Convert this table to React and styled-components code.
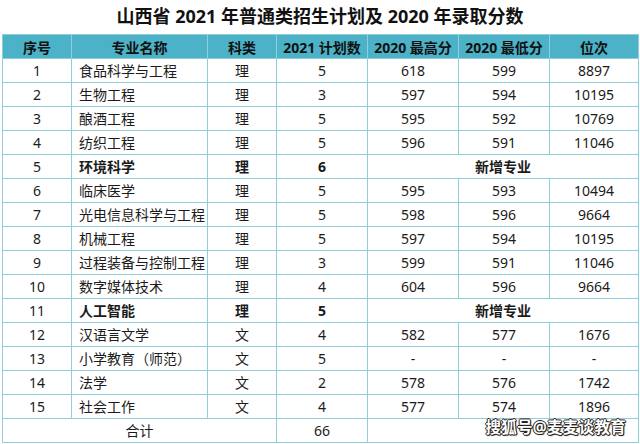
import styled, { createGlobalStyle } from "styled-components";

const GlobalStyle = createGlobalStyle`
  body {
    margin: 0;
    background: #fff;
    font-family: "Noto Sans", "Noto Sans CJK SC", sans-serif;
    color: #1b1b1b;
  }
`;

const Page = styled.div`
  width: 640px;
  height: 444px;
  padding: 0 2px;
  box-sizing: border-box;
  position: relative;
  overflow: hidden;
`;

const Title = styled.h1`
  margin: 0;
  height: 34px;
  line-height: 32px;
  text-align: center;
  font-size: 18px;
  font-weight: 700;
  color: #111;
`;

const Table = styled.table`
  width: 636px;
  border-collapse: collapse;
  table-layout: fixed;
  font-size: 14px;
`;

const HeadCell = styled.th`
  height: 23px;
  padding: 0;
  background: #4bb2c7;
  border: 1px solid #8fcfdc;
  font-weight: 700;
  font-size: 14px;
  color: #111;
  text-align: center;
`;

const Cell = styled.td`
  height: 23px;
  padding: ${(p) => (p.$left ? "0 0 0 7px" : "0")};
  border: 1px solid #8fcfdc;
  text-align: ${(p) => (p.$left ? "left" : "center")};
  font-weight: ${(p) => (p.$bold ? 700 : 400)};
  white-space: nowrap;
  line-height: 22px;
`;

const Watermark = styled.span`
  position: absolute;
  right: 14px;
  bottom: 6px;
  font-size: 15.5px;
  font-weight: 700;
  color: #fff;
  letter-spacing: 0.3px;
  text-shadow: 1px 0 0 #222, -1px 0 0 #222, 0 1px 0 #222, 0 -1px 0 #222,
    1px 1px 1px #222;
`;

const widths = [69, 136, 69, 91, 91, 91, 89];
const heads = ["序号", "专业名称", "科类", "2021 计划数", "2020 最高分", "2020 最低分", "位次"];

const rows = [
  ["1", "食品科学与工程", "理", "5", "618", "599", "8897"],
  ["2", "生物工程", "理", "3", "597", "594", "10195"],
  ["3", "酿酒工程", "理", "5", "595", "592", "10769"],
  ["4", "纺织工程", "理", "5", "596", "591", "11046"],
  ["5", "环境科学", "理", "6", null],
  ["6", "临床医学", "理", "5", "595", "593", "10494"],
  ["7", "光电信息科学与工程", "理", "5", "598", "596", "9664"],
  ["8", "机械工程", "理", "5", "597", "594", "10195"],
  ["9", "过程装备与控制工程", "理", "3", "599", "591", "11046"],
  ["10", "数字媒体技术", "理", "4", "604", "596", "9664"],
  ["11", "人工智能", "理", "5", null],
  ["12", "汉语言文学", "文", "4", "582", "577", "1676"],
  ["13", "小学教育（师范）", "文", "5", "-", "-", "-"],
  ["14", "法学", "文", "2", "578", "576", "1742"],
  ["15", "社会工作", "文", "4", "577", "574", "1896"],
];

export default function App() {
  return (
    <Page>
      <GlobalStyle />
      <Title>山西省 2021 年普通类招生计划及 2020 年录取分数</Title>
      <Table>
        <colgroup>
          {widths.map((w, i) => (
            <col key={i} style={{ width: w }} />
          ))}
        </colgroup>
        <thead>
          <tr>
            {heads.map((h) => (
              <HeadCell key={h}>{h}</HeadCell>
            ))}
          </tr>
        </thead>
        <tbody>
          {rows.map((r) => {
            const isNew = r[4] === null;
            return (
              <tr key={r[0]}>
                <Cell>{r[0]}</Cell>
                <Cell $left $bold={isNew}>{r[1]}</Cell>
                <Cell $bold={isNew}>{r[2]}</Cell>
                <Cell $bold={isNew}>{r[3]}</Cell>
                {isNew ? (
                  <Cell colSpan={3} $bold>新增专业</Cell>
                ) : (
                  <>
                    <Cell>{r[4]}</Cell>
                    <Cell>{r[5]}</Cell>
                    <Cell>{r[6]}</Cell>
                  </>
                )}
              </tr>
            );
          })}
          <tr>
            <Cell colSpan={3}>合计</Cell>
            <Cell>66</Cell>
            <Cell colSpan={3}></Cell>
          </tr>
        </tbody>
      </Table>
      <Watermark>搜狐号@麦麦谈教育</Watermark>
    </Page>
  );
}
